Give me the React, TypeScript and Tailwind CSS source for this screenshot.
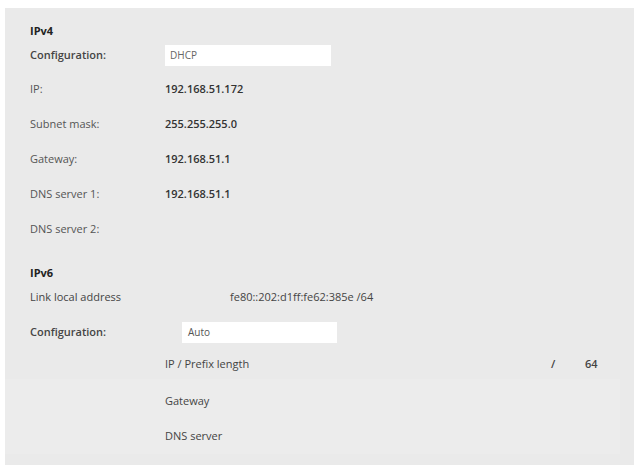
import React from "react";

type Row = { label: string; value?: string };

const ipv4: Row[] = [
  { label: "IP:", value: "192.168.51.172" },
  { label: "Subnet mask:", value: "255.255.255.0" },
  { label: "Gateway:", value: "192.168.51.1" },
  { label: "DNS server 1:", value: "192.168.51.1" },
  { label: "DNS server 2:" },
];

const font = { fontFamily: "'Open Sans', 'Noto Sans', sans-serif" };

const App = () => {
  return (
    <div className="w-[637px] h-[470px] bg-white pt-[8px] pl-[5px]" style={font}>
      <div className="w-[629px] h-[457px] bg-[#eaeaea] pt-[13px] pb-[11px] text-[11px] text-[#3a3a3a]">
        {/* IPv4 */}
        <div className="h-[20px] flex items-center pl-[25px] font-bold text-[#222]">IPv4</div>
        <div className="mt-[2px] h-[24px] flex items-center">
          <span className="w-[160px] pl-[25px] font-semibold text-[#444]">Configuration:</span>
          <div className="w-[166px] h-[21px] bg-white flex items-center pl-[5px] text-[10px] text-[#666]">DHCP</div>
        </div>
        <div className="mt-[5px]">
          {ipv4.map((r) => (
            <div key={r.label} className="h-[35px] flex items-center">
              <span className="w-[160px] pl-[25px] text-[#555]">{r.label}</span>
              <span className="font-semibold text-[#333]">{r.value}</span>
            </div>
          ))}
        </div>

        {/* IPv6 */}
        <div className="mt-[16px] h-[20px] flex items-center pl-[25px] font-bold text-[#222]">IPv6</div>
        <div className="mt-[2px] h-[24px] flex items-center">
          <span className="w-[225px] pl-[25px] text-[#444]">Link local address</span>
          <span className="text-[#444]">fe80::202:d1ff:fe62:385e /64</span>
        </div>
        <div className="mt-[11px] h-[24px] flex items-center">
          <span className="w-[177px] pl-[25px] font-semibold text-[#444]">Configuration:</span>
          <div className="w-[155px] h-[21px] bg-white flex items-center pl-[6px] text-[10px] text-[#555]">Auto</div>
        </div>
        <div className="mt-[5px] h-[30px] flex items-center pl-[160px] text-[#444]">
          <span className="w-[386px]">IP / Prefix length</span>
          <span className="w-[34px] font-semibold">/</span>
          <span className="font-semibold">64</span>
        </div>
        {/* lighter strip under the prefix row */}
        <div className="bg-[#ececec] mr-[14px] pt-[5px]">
          <div className="h-[35px] flex items-center pl-[160px] text-[#444]">Gateway</div>
          <div className="h-[35px] flex items-center pl-[160px] text-[#444]">DNS server</div>
        </div>
      </div>
    </div>
  );
};

export default App;
